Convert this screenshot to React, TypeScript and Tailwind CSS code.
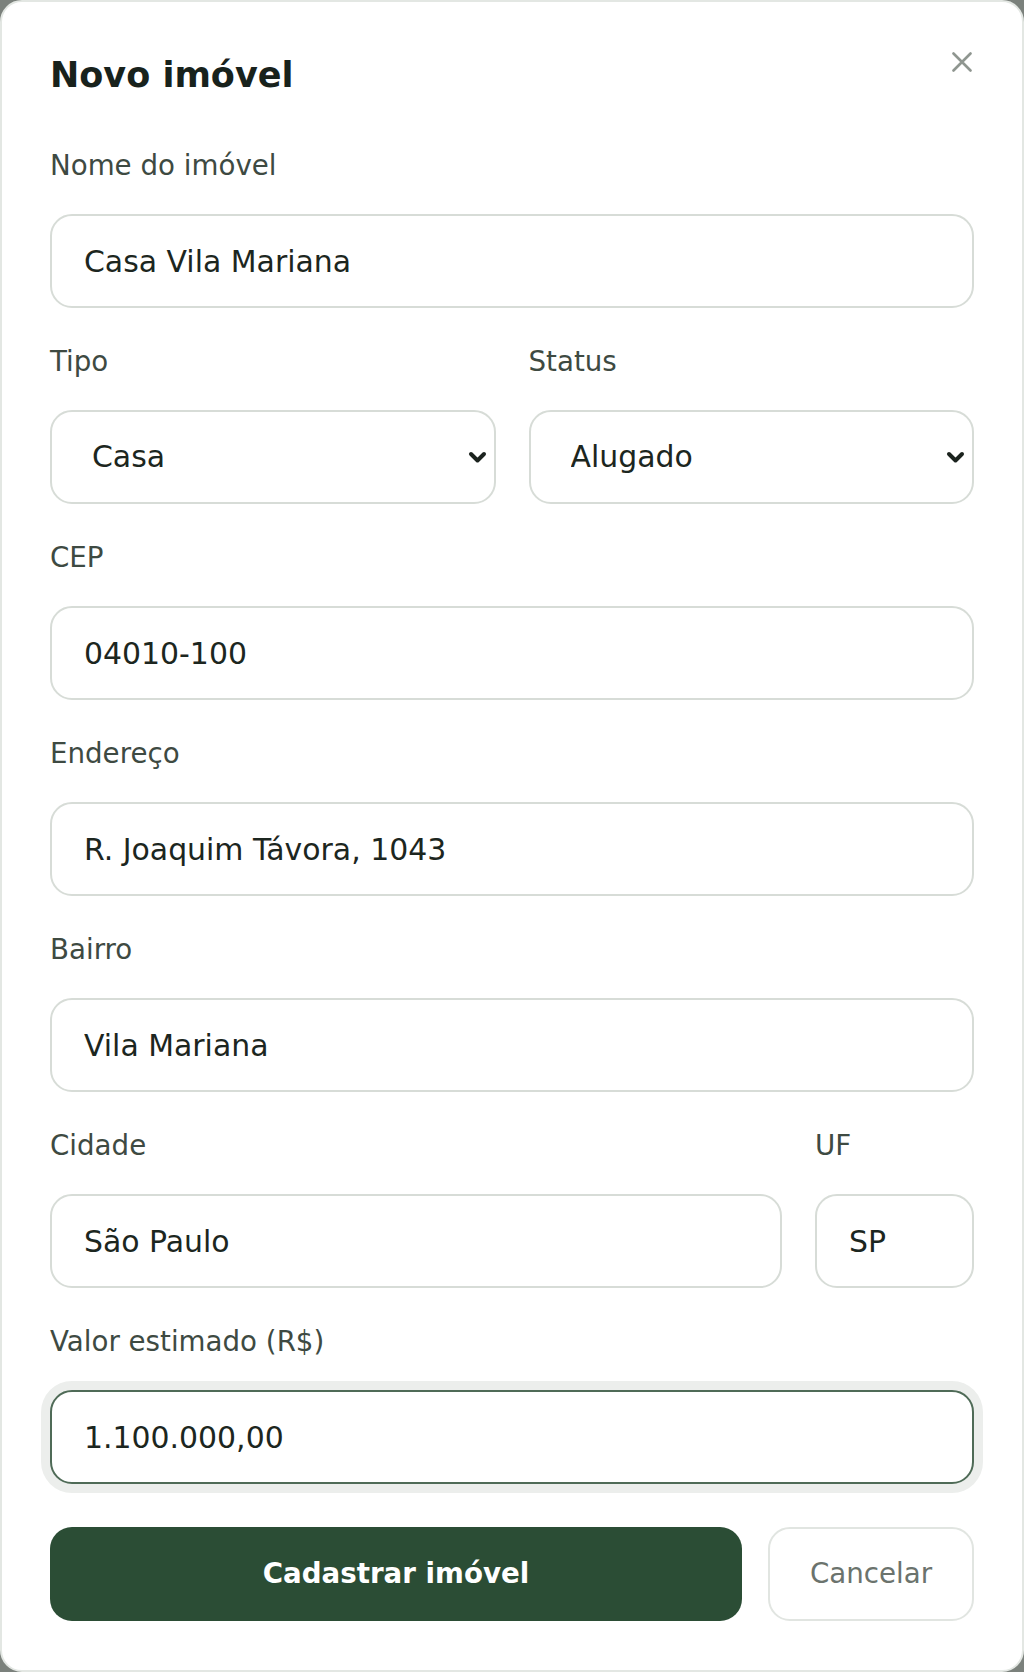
import type { ReactNode } from 'react'

// ─── Form bits ───────────────────────────────────────────────────────────────

const font = "font-['DejaVu_Sans',sans-serif]"

function Field({ label, children }: { label: string; children: ReactNode }) {
  return (
    <div className="flex min-w-0 flex-col">
      <label className="mb-[31px] mt-[3px] block h-[34px] text-[27.7px] leading-[34px] text-[#3e4a42]">{label}</label>
      {children}
    </div>
  )
}

function TextInput({ value, focused = false }: { value: string; focused?: boolean }) {
  return (
    <input
      className={`block h-[94px] w-full rounded-[22px] border-2 bg-white px-[32px] text-[29.9px] text-[#1c2620] outline-none ${
        focused ? 'border-[#4f6b57] ring-[9px] ring-[#eceeec]' : 'border-[#d7dcd7]'
      }`}
      defaultValue={value}
      readOnly
    />
  )
}

function Select({ value, options }: { value: string; options: string[] }) {
  return (
    <div className="relative">
      <select
        className="block h-[94px] w-full appearance-none rounded-[22px] border-2 border-[#d7dcd7] bg-white pl-[40px] pr-[50px] text-[29.9px] text-[#1c2620] outline-none"
        defaultValue={value}
      >
        {options.map((o) => (
          <option key={o}>{o}</option>
        ))}
      </select>
      <svg
        className="pointer-events-none absolute right-[9px] top-1/2 h-[14px] w-[19px] -translate-y-1/2"
        viewBox="0 0 19 14"
        fill="none"
      >
        <path d="M3 4 L9.5 10.5 L16 4" stroke="#1b231e" strokeWidth="4" strokeLinecap="round" strokeLinejoin="round" />
      </svg>
    </div>
  )
}

// ─── Modal ───────────────────────────────────────────────────────────────────

export default function App() {
  return (
    <div className={`min-h-screen bg-[#7b817c] ${font}`}>
      <section className="relative min-h-[1672px] rounded-[22px] border-2 border-[#e3e7e3] bg-white px-[48px] pb-[47px] pt-[49px]">
        <button
          aria-label="Fechar"
          className="absolute right-[50px] top-[50px] flex h-[20px] w-[20px] items-center justify-center"
          type="button"
        >
          <svg viewBox="0 0 20 20" className="h-[20px] w-[20px]" fill="none">
            <path d="M1.5 1.5 L18.5 18.5 M18.5 1.5 L1.5 18.5" stroke="#8f9690" strokeWidth="2.6" strokeLinecap="round" />
          </svg>
        </button>

        <h2 className="mb-[47px] h-[48px] text-[35px] font-bold leading-[48px] text-[#18221c]">Novo imóvel</h2>

        <div className="flex flex-col gap-[34px]">
          <Field label="Nome do imóvel">
            <TextInput value="Casa Vila Mariana" />
          </Field>

          <div className="grid grid-cols-2 gap-[33px]">
            <Field label="Tipo">
              <Select value="Casa" options={['Casa', 'Apartamento', 'Terreno', 'Sala comercial']} />
            </Field>
            <Field label="Status">
              <Select value="Alugado" options={['Disponível', 'Alugado', 'Vendido']} />
            </Field>
          </div>

          <Field label="CEP">
            <TextInput value="04010-100" />
          </Field>

          <Field label="Endereço">
            <TextInput value="R. Joaquim Távora, 1043" />
          </Field>

          <Field label="Bairro">
            <TextInput value="Vila Mariana" />
          </Field>

          <div className="grid grid-cols-[1fr_159px] gap-[33px]">
            <Field label="Cidade">
              <TextInput value="São Paulo" />
            </Field>
            <Field label="UF">
              <TextInput value="SP" />
            </Field>
          </div>

          <Field label="Valor estimado (R$)">
            <TextInput value="1.100.000,00" focused />
          </Field>
        </div>

        <div className="mt-[43px] flex gap-[26px]">
          <button
            className="h-[94px] flex-1 rounded-[22px] bg-[#2b4d35] text-[27.7px] font-bold text-white"
            type="button"
          >
            Cadastrar imóvel
          </button>
          <button
            className="h-[94px] w-[206px] rounded-[22px] border-2 border-[#e1e5e1] bg-white text-[27.7px] text-[#6b736d]"
            type="button"
          >
            Cancelar
          </button>
        </div>
      </section>
    </div>
  )
}
